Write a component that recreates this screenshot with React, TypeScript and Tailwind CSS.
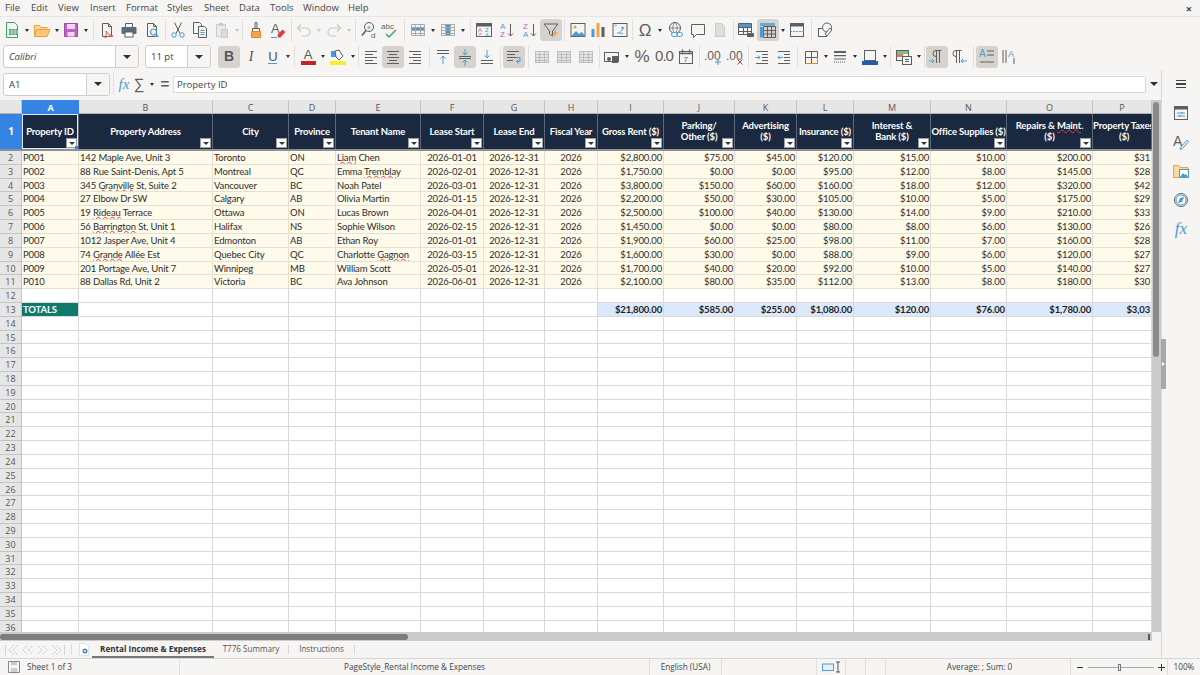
import type { ReactNode } from 'react'

const GREY = '#5e5e5e'
const BLUE = '#4a9ad4'
const PALE = '#c9c9c9'
const SANS = 'Liberation Sans, sans-serif'

const COLS = 'grid grid-cols-[22px_57px_134px_76px_47px_85px_63px_61px_53px_66px_71px_62px_57px_77px_76px_86px_59px]'

const LETTERS = ['A', 'B', 'C', 'D', 'E', 'F', 'G', 'H', 'I', 'J', 'K', 'L', 'M', 'N', 'O', 'P']

const HEADERS = [
  ['Property ID'],
  ['Property Address'],
  ['City'],
  ['Province'],
  ['Tenant Name'],
  ['Lease Start'],
  ['Lease End'],
  ['Fiscal Year'],
  ['Gross Rent ($)'],
  ['Parking/', 'Other ($)'],
  ['Advertising', '($)'],
  ['Insurance ($)'],
  ['Interest &', 'Bank ($)'],
  ['Office Supplies ($)'],
  ['Repairs & Maint.', '($)'],
  ['Property Taxes', '($)'],
]

const END = '2026-12-31'
const ROWS = [
  ['P001', '142 Maple Ave, Unit 3', 'Toronto', 'ON', 'Liam Chen', '2026-01-01', END, '2026', '$2,800.00', '$75.00', '$45.00', '$120.00', '$15.00', '$10.00', '$200.00', '$31'],
  ['P002', '88 Rue Saint-Denis, Apt 5', 'Montreal', 'QC', 'Emma Tremblay', '2026-02-01', END, '2026', '$1,750.00', '$0.00', '$0.00', '$95.00', '$12.00', '$8.00', '$145.00', '$28'],
  ['P003', '345 Granville St, Suite 2', 'Vancouver', 'BC', 'Noah Patel', '2026-03-01', END, '2026', '$3,800.00', '$150.00', '$60.00', '$160.00', '$18.00', '$12.00', '$320.00', '$42'],
  ['P004', '27 Elbow Dr SW', 'Calgary', 'AB', 'Olivia Martin', '2026-01-15', END, '2026', '$2,200.00', '$50.00', '$30.00', '$105.00', '$10.00', '$5.00', '$175.00', '$29'],
  ['P005', '19 Rideau Terrace', 'Ottawa', 'ON', 'Lucas Brown', '2026-04-01', END, '2026', '$2,500.00', '$100.00', '$40.00', '$130.00', '$14.00', '$9.00', '$210.00', '$33'],
  ['P006', '56 Barrington St, Unit 1', 'Halifax', 'NS', 'Sophie Wilson', '2026-02-15', END, '2026', '$1,450.00', '$0.00', '$0.00', '$80.00', '$8.00', '$6.00', '$130.00', '$26'],
  ['P007', '1012 Jasper Ave, Unit 4', 'Edmonton', 'AB', 'Ethan Roy', '2026-01-01', END, '2026', '$1,900.00', '$60.00', '$25.00', '$98.00', '$11.00', '$7.00', '$160.00', '$28'],
  ['P008', '74 Grande Allée Est', 'Quebec City', 'QC', 'Charlotte Gagnon', '2026-03-15', END, '2026', '$1,600.00', '$30.00', '$0.00', '$88.00', '$9.00', '$6.00', '$120.00', '$27'],
  ['P009', '201 Portage Ave, Unit 7', 'Winnipeg', 'MB', 'William Scott', '2026-05-01', END, '2026', '$1,700.00', '$40.00', '$20.00', '$92.00', '$10.00', '$5.00', '$140.00', '$27'],
  ['P010', '88 Dallas Rd, Unit 2', 'Victoria', 'BC', 'Ava Johnson', '2026-06-01', END, '2026', '$2,100.00', '$80.00', '$35.00', '$112.00', '$13.00', '$8.00', '$180.00', '$30'],
]
const TOTALS = ['$21,800.00', '$585.00', '$255.00', '$1,080.00', '$120.00', '$76.00', '$1,780.00', '$3,03']

const MISSPELT = new Set(['Liam', 'Tremblay', 'Granville', 'Rideau', 'Barrington', 'Grande', 'Gagnon', 'Maint'])

function Spelled({ text }: { text: string }) {
  return (
    <>
      {text.split(/(\s+|,|\.)/).map((part, i) =>
        MISSPELT.has(part) ? (
          <span key={i} className="underline decoration-wavy decoration-[#e0403a] decoration-[0.7px] underline-offset-[0px]">
            {part}
          </span>
        ) : (
          <span key={i}>{part}</span>
        ),
      )}
    </>
  )
}

function I({ children, size = 18 }: { children: ReactNode; size?: number }) {
  return (
    <svg width={size} height={size} viewBox="0 0 18 18" fill="none" strokeWidth="1">
      {children}
    </svg>
  )
}

function Btn({ w = 22, on, children }: { w?: number; on?: boolean; children: ReactNode }) {
  return (
    <div
      style={{ width: w }}
      className={`h-[22px] shrink-0 flex items-center justify-center rounded-[3px] ${on ? 'bg-[#d6d3cf]' : ''}`}
    >
      {children}
    </div>
  )
}

function Arrow({ w = 8, pale }: { w?: number; pale?: boolean }) {
  return (
    <div style={{ width: w }} className="h-[22px] shrink-0 flex items-center justify-center">
      <div className={`w-0 h-0 border-x-[2.5px] border-x-transparent border-t-[3px] ${pale ? 'border-t-[#c9c9c9]' : 'border-t-[#2e2e2e]'}`} />
    </div>
  )
}

function Sep({ w = 6 }: { w?: number }) {
  return (
    <div style={{ width: w }} className="h-[22px] shrink-0 flex justify-center">
      <div className="w-px h-full bg-[#e2e0dd]" />
    </div>
  )
}

function Lines({ rows, color = GREY }: { rows: [number, number, number][]; color?: string }) {
  return (
    <>
      {rows.map(([y, a, b], i) => (
        <path key={i} d={`M${a} ${y}.5H${b}`} stroke={color} />
      ))}
    </>
  )
}

function GridGlyph({ color = '#a9a9a9', hi, fill }: { color?: string; hi?: 'row' | 'col'; fill?: string }) {
  return (
    <I>
      {fill && <rect x="2" y="3" width="14" height="12" fill={fill} />}
      {hi === 'row' && <rect x="2" y="6" width="14" height="3" fill={BLUE} />}
      {hi === 'col' && <rect x="7" y="3" width="4" height="12" fill={BLUE} />}
      <path d="M2.5 3.5h13v11h-13zM2.5 6.5h13M2.5 9.5h13M2.5 12.5h13M6.5 3.5v11M11.5 3.5v11" stroke={color} />
    </I>
  )
}

function Page({ stroke = GREY }: { stroke?: string }) {
  return <path d="M4.5 2.5h6l3 3v10h-9zM10.5 2.5v3h3" stroke={stroke} strokeLinejoin="round" />
}

function Az({ top, bottom, x = 3 }: { top: string; bottom: string; x?: number }) {
  return (
    <>
      <text x={x} y="8" fontSize="8" fontFamily={SANS} fill={top === 'A' ? BLUE : '#c25bd0'}>{top}</text>
      <text x={x} y="16" fontSize="8" fontFamily={SANS} fill={bottom === 'A' ? BLUE : '#c25bd0'}>{bottom}</text>
      <path d="M13.5 3v12M11 12.5l2.5 2.5 2.5-2.5" stroke={GREY} />
    </>
  )
}

function ToolbarOne() {
  return (
    <div className="h-[26px] flex items-center pl-px">
      <Btn>
        <I>
          <path d="M3.5 1.5h8l3 3v12h-11z" stroke="#3f9f5f" />
          <rect x="6" y="8" width="9" height="6" fill="#3f9f5f" />
          <path d="M6 10h9M6 12h9M9 8v6M12 8v6" stroke="#fff" strokeWidth=".6" />
        </I>
      </Btn>
      <Arrow />
      <Btn>
        <I>
          <path d="M1.5 4.5h5l1.5 2h6v2h-10l-2.5 6z" fill="#fbd9a0" stroke="#ef9f3b" />
          <path d="M1.5 15.5l2.5-7h13l-3 7z" fill="#fcc777" stroke="#ef9f3b" />
        </I>
      </Btn>
      <Arrow />
      <div className="-ml-px"><Btn>
        <I>
          <path d="M2.5 2.5h13v13h-13z" fill="#bf5fc4" stroke="#a648ab" />
          <rect x="5" y="3" width="8" height="5" fill="#f0d6f2" />
          <rect x="5.5" y="11" width="7" height="4.5" fill="#f0d6f2" />
        </I>
      </Btn></div>
      <Arrow />
      <Sep />
      <Btn>
        <I>
          <Page />
          <path d="M8 10c1 2 3 4 7 5-3 0-6 0-8 2 1-3 2-5 1-7z" stroke="#d9534f" />
        </I>
      </Btn>
      <Btn>
        <I>
          <path d="M5.5 6V2.5h7V6" stroke={GREY} />
          <rect x="1.5" y="6" width="15" height="7" rx="1" fill="#5b6b78" />
          <rect x="5" y="11" width="8" height="5" fill="#fff" stroke={GREY} />
        </I>
      </Btn>
      <div className="ml-px"><Btn>
        <I>
          <Page />
          <circle cx="10.5" cy="11" r="3" stroke={BLUE} strokeWidth="1.2" />
          <path d="M12.8 13.3l2.5 2.5" stroke={BLUE} strokeWidth="1.4" />
        </I>
      </Btn></div>
      <Sep w={4} />
      <Btn>
        <I>
          <path d="M5.5 1.5l5.5 11M12.5 1.5l-5.5 11" stroke={GREY} />
          <circle cx="5" cy="14" r="2.2" stroke={BLUE} />
          <circle cx="13" cy="14" r="2.2" stroke={BLUE} />
        </I>
      </Btn>
      <Btn>
        <I>
          <path d="M2.5 1.5h6l2 2v9h-8z" stroke={GREY} />
          <path d="M7.5 5.5h6l2 2v9h-8z" fill="#f6f5f4" stroke={GREY} />
          <path d="M9.5 9.5h4M9.5 11.5h4M9.5 13.5h4" stroke={BLUE} />
        </I>
      </Btn>
      <Btn>
        <I>
          <path d="M3.5 3.5h9v12h-9z" stroke={PALE} fill="#ececec" />
          <path d="M6 2h4v3H6z" fill={PALE} />
          <path d="M8.5 8.5h6v8h-6z" fill="#dcdcdc" stroke={PALE} />
        </I>
      </Btn>
      <Arrow w={7} pale />
      <Sep w={5} />
      <Btn>
        <I>
          <path d="M8 1.5h2v6H8z" stroke={GREY} />
          <path d="M5.5 7.5h7v3h-7z" fill="#f6f5f4" stroke={GREY} />
          <path d="M4.5 10.5h9v6h-9z" fill="#f5a34a" stroke="#e58a23" />
        </I>
      </Btn>
      <Btn>
        <I>
          <text x="2" y="12" fontSize="13" fontFamily={SANS} fill={GREY}>A</text>
          <path d="M8.5 13.5l5-5 3 2.5-5 5.5h-2.5z" fill="#e0403a" />
          <path d="M2 16.5h6" stroke={BLUE} />
        </I>
      </Btn>
      <Sep w={4} />
      <Btn>
        <I>
          <path d="M6 3.5L2.5 7 6 10.5M2.5 7H11a4 4 0 0 1 0 8H7" stroke={PALE} strokeWidth="1.2" />
        </I>
      </Btn>
      <Arrow pale />
      <Btn>
        <I>
          <path d="M12 3.5L15.5 7 12 10.5M15.5 7H7a4 4 0 0 0 0 8h4" stroke={PALE} strokeWidth="1.2" />
        </I>
      </Btn>
      <Arrow pale />
      <Sep w={5} />
      <Btn>
        <I>
          <circle cx="9" cy="6" r="4.5" stroke={GREY} />
          <path d="M6 9.5l-4 5" stroke={GREY} strokeWidth="1.6" />
          <text x="7" y="8" fontSize="6" fontFamily={SANS} fill={BLUE}>a</text>
          <text x="11" y="17" fontSize="8" fontFamily={SANS} fill={GREY}>d</text>
        </I>
      </Btn>
      <div className="-ml-px"><Btn>
        <I>
          <text x="0" y="8" fontSize="8" fontFamily={SANS} fill={GREY}>abc</text>
          <path d="M5 13l3 3 7-7" stroke="#3f9f5f" strokeWidth="1.4" />
        </I>
      </Btn></div>
      <Sep />
      <Btn><GridGlyph hi="row" /></Btn>
      <Arrow />
      <Btn><GridGlyph hi="col" /></Btn>
      <Arrow />
      <Sep w={6} />
      <Btn>
        <I>
          <rect x="1.5" y="2.5" width="15" height="13" stroke={GREY} />
          <rect x="1.5" y="2.5" width="15" height="3" fill={GREY} />
          <text x="3" y="11" fontSize="6" fontFamily={SANS} fill="#c25bd0">A</text>
          <text x="3" y="15.5" fontSize="6" fontFamily={SANS} fill="#c25bd0">Z</text>
          <text x="10" y="11" fontSize="6" fontFamily={SANS} fill={BLUE}>Z</text>
          <text x="10" y="15.5" fontSize="6" fontFamily={SANS} fill={BLUE}>A</text>
        </I>
      </Btn>
      <Btn><I><Az top="A" bottom="Z" /></I></Btn>
      <div className="ml-px"><Btn><I><Az top="Z" bottom="A" /></I></Btn></div>
      <Btn on>
        <I>
          <path d="M2 3h14l-5.5 7v5l-3-2v-3z" stroke={GREY} strokeLinejoin="round" />
          <path d="M14.5 7l-4 6 2 .5-1 3.5 4-5.5-2-.5z" fill="#f0a63a" />
        </I>
      </Btn>
      <Sep w={5} />
      <Btn>
        <I>
          <rect x="2" y="2.5" width="14" height="13" stroke={GREY} />
          <circle cx="6" cy="6" r="1.5" fill="#f0a63a" />
          <path d="M2.5 15l4.5-5 3 3 2.5-2 3 3v1.5z" fill={BLUE} />
        </I>
      </Btn>
      <div className="-ml-[2px]"><Btn>
        <I>
          <rect x="2.5" y="8" width="3" height="8" fill={BLUE} />
          <rect x="7.5" y="2" width="3" height="14" fill="#f0a63a" />
          <rect x="12.5" y="6" width="3" height="10" fill={GREY} />
        </I>
      </Btn></div>
      <Btn>
        <I>
          <rect x="2" y="2.5" width="14" height="13" stroke={GREY} />
          <rect x="3" y="3.5" width="3" height="2" fill={PALE} />
          <path d="M6 12c2 0 5-1 6-6M12 6l-2 1M12 6l1 2M12 12c-2 1-4 0-4 0" stroke={BLUE} />
        </I>
      </Btn>
      <Sep w={3} />
      <Btn>
        <span className="text-[17px] leading-none text-[#5e5e5e] font-['Liberation_Sans',sans-serif]">Ω</span>
      </Btn>
      <Arrow />
      <div className="ml-px"><Btn>
        <I>
          <circle cx="8" cy="7" r="5.5" stroke={GREY} />
          <path d="M2.5 7h11M8 1.5c-3 3-3 8 0 11M8 1.5c3 3 3 8 0 11" stroke={GREY} strokeWidth=".7" />
          <rect x="4.5" y="11.5" width="6" height="4" rx="2" fill="#f6f5f4" stroke={BLUE} />
          <rect x="9.5" y="11.5" width="6" height="4" rx="2" stroke={BLUE} />
        </I>
      </Btn></div>
      <Btn>
        <I>
          <path d="M2.5 3.5h13v10H7.5l-3 3v-3h-2z" stroke={GREY} strokeLinejoin="round" />
        </I>
      </Btn>
      <Btn>
        <I>
          <path d="M4.5 2.5h6l3 3v10h-9z" fill="#dededc" stroke={PALE} />
        </I>
      </Btn>
      <Sep w={4} />
      <Btn>
        <I>
          <path d="M1.5 2.5h13v11h-13zM1.5 6.5h13M1.5 10.5h13M6.5 2.5v11M10.5 2.5v11" stroke={GREY} />
          <rect x="2" y="3" width="12" height="3" fill={BLUE} />
          <rect x="10" y="12" width="7" height="4" rx="1" fill={GREY} />
        </I>
      </Btn>
      <Btn on>
        <I>
          <path d="M4.5 5.5h12v11h-12zM4.5 9.5h12M4.5 13h12M8.5 5.5v11M12.5 5.5v11" stroke={GREY} />
          <rect x="1" y="6" width="3.5" height="10.5" fill={BLUE} />
          <rect x="1" y="2" width="15" height="3" fill={BLUE} opacity=".75" />
        </I>
      </Btn>
      <Arrow w={7} />
      <Btn>
        <I>
          <rect x="2.5" y="2.5" width="13" height="13" stroke={GREY} />
          <rect x="2.5" y="2.5" width="13" height="3" fill={GREY} />
          <path d="M2 10.5h14" stroke={BLUE} strokeDasharray="2 1" />
        </I>
      </Btn>
      <Sep />
      <Btn>
        <I>
          <rect x="2.5" y="7.5" width="8" height="8" stroke={GREY} />
          <circle cx="11" cy="6.5" r="4.5" fill="#f6f5f4" stroke={GREY} />
          <path d="M9 13l5-6 2 2-5 6z" fill="#f6f5f4" stroke={GREY} />
        </I>
      </Btn>
    </div>
  )
}

function Combo({ w, value, dd, italic }: { w: number; value: string; dd: number; italic?: boolean }) {
  return (
    <div style={{ width: w }} className="h-[23px] shrink-0 flex rounded-[3px] border border-[#cfcdc9] bg-white overflow-hidden">
      <div className={`flex-1 pl-[5px] text-[9.5px] leading-[21px] text-[#3d3d3d] ${italic ? 'italic' : ''}`}>{value}</div>
      <div style={{ width: dd }} className="border-l border-[#cfcdc9] bg-[#f6f5f4] flex items-center justify-center">
        <div className="w-0 h-0 border-x-[4px] border-x-transparent border-t-[4px] border-t-[#2e2e2e]" />
      </div>
    </div>
  )
}

function TextLines({ rows, color = GREY }: { rows: [number, number, number][]; color?: string }) {
  return <I><Lines rows={rows} color={color} /></I>
}

function VAlign({ pos }: { pos: 'top' | 'mid' | 'bot' }) {
  return (
    <I>
      {pos === 'top' && <><path d="M3 2.5h12M3 5.5h12" stroke={GREY} /><path d="M9 16V8M6.5 10.5L9 8l2.5 2.5" stroke={BLUE} /></>}
      {pos === 'mid' && <><path d="M3 8.5h12M3 10.5h12" stroke={GREY} /><path d="M9 1v6M6.5 4.5L9 7l2.5-2.5M9 18v-6M6.5 14.5L9 12l2.5 2.5" stroke={BLUE} /></>}
      {pos === 'bot' && <><path d="M3 12.5h12M3 15.5h12" stroke={GREY} /><path d="M9 2v8M6.5 7.5L9 10l2.5-2.5" stroke={BLUE} /></>}
    </I>
  )
}

function ToolbarTwo() {
  return (
    <div className="h-[27px] flex items-center pl-[3px]">
      <Combo w={136} value="Calibri" dd={23} italic />
      <div className="w-[6px] shrink-0" />
      <Combo w={66} value="11 pt" dd={23} />
      <div className="w-[7px] shrink-0" />
      <Btn on><span className="text-[14px] font-bold text-[#555] font-['Liberation_Sans',sans-serif]">B</span></Btn>
      <Btn><span className="text-[14px] italic text-[#555] font-['Liberation_Serif',serif]">I</span></Btn>
      <Btn>
        <div className="flex flex-col items-center leading-none">
          <span className="text-[13px] text-[#555] font-['Liberation_Sans',sans-serif]">U</span>
          <div className="w-[9px] h-px bg-[#4a9ad4]" />
        </div>
      </Btn>
      <Arrow w={8} />
      <Sep w={5} />
      <Btn>
        <div className="flex flex-col items-center leading-none">
          <span className="text-[13px] text-[#555] font-['Liberation_Sans',sans-serif]">A</span>
          <div className="w-[15px] h-[4px] bg-[#c9211e]" />
        </div>
      </Btn>
      <Arrow w={8} />
      <Btn>
        <I>
          <rect x="2" y="3" width="6" height="6" fill={BLUE} />
          <path d="M6 3l4-1 4 6-4 4-3-3z" fill="#f6f5f4" stroke={GREY} />
          <rect x="1" y="13" width="16" height="4" fill="#f7ef2a" />
        </I>
      </Btn>
      <Arrow w={8} />
      <Sep w={3} />
      <Btn><TextLines rows={[[3, 3, 15], [6, 3, 11], [9, 3, 15], [12, 3, 11], [15, 3, 15]]} /></Btn>
      <Btn on><TextLines rows={[[3, 3, 15], [6, 5, 13], [9, 3, 15], [12, 5, 13], [15, 3, 15]]} /></Btn>
      <Btn><TextLines rows={[[3, 3, 15], [6, 7, 15], [9, 3, 15], [12, 7, 15], [15, 3, 15]]} /></Btn>
      <Sep w={6} />
      <Btn><VAlign pos="top" /></Btn>
      <Btn on><VAlign pos="mid" /></Btn>
      <Btn><VAlign pos="bot" /></Btn>
      <Sep w={5} />
      <Btn on>
        <I>
          <Lines rows={[[3, 2, 14], [6, 2, 10], [9, 2, 14], [12, 2, 8]]} />
          <path d="M11 9.5h4v4h-3M13.5 11.5l-2 2 2 2" stroke={BLUE} />
        </I>
      </Btn>
      <Sep w={6} />
      {[0, 1, 2].map(i => (
        <Btn key={i}><GridGlyph color="#bdbdbd" fill="#e4e4e2" /></Btn>
      ))}
      <Sep w={4} />
      <Btn>
        <I>
          <rect x="1.5" y="4.5" width="14" height="9" stroke={GREY} />
          <circle cx="6" cy="11" r="2" fill={GREY} />
          <rect x="9" y="8" width="6" height="7" fill={GREY} />
        </I>
      </Btn>
      <Arrow w={8} />
      <Btn><span className="text-[17px] font-light text-[#5e5e5e] font-['Liberation_Sans',sans-serif]">%</span></Btn>
      <Btn><span className="text-[15px] tracking-[-1px] text-[#5e5e5e] font-['Liberation_Sans',sans-serif]">0.0</span></Btn>
      <Btn>
        <I>
          <rect x="2.5" y="3.5" width="13" height="12" stroke={GREY} />
          <path d="M2.5 5.5h13M5.5 1.5v3M12.5 1.5v3" stroke={GREY} strokeWidth="1.3" />
          <text x="6.5" y="14" fontSize="8" fontFamily={SANS} fill={GREY}>7</text>
        </I>
      </Btn>
      <Sep w={5} />
      <Btn>
        <I>
          <text x="0" y="12" fontSize="12" fontFamily={SANS} fill={GREY}>.00</text>
          <path d="M14 11v6M11 14h6" stroke={BLUE} />
        </I>
      </Btn>
      <Btn>
        <I>
          <text x="0" y="12" fontSize="12" fontFamily={SANS} fill={GREY}>.00</text>
          <path d="M11.5 11.5l5 5M16.5 11.5l-5 5" stroke="#e0403a" />
        </I>
      </Btn>
      <Sep w={5} />
      <Btn>
        <I>
          <Lines rows={[[3, 3, 15], [6, 9, 15], [9, 9, 15], [12, 9, 15], [15, 3, 15]]} />
          <path d="M2 9.5h5M5 7.5l2 2-2 2" stroke={BLUE} />
        </I>
      </Btn>
      <Btn>
        <I>
          <Lines rows={[[3, 3, 15], [6, 9, 15], [9, 9, 15], [12, 9, 15], [15, 3, 15]]} />
          <path d="M8 9.5H3M5 7.5l-2 2 2 2" stroke={BLUE} />
        </I>
      </Btn>
      <Sep w={5} />
      <Btn>
        <I>
          <path d="M3.5 3.5h12v12h-12zM9.5 3.5v12M3.5 9.5h12" stroke={GREY} />
          <path d="M3.5 15.5h12v-6" stroke="#e58a23" />
        </I>
      </Btn>
      <Arrow w={7} />
      <Btn>
        <I>
          <path d="M3 3h12v2H3zM3 7h12v1.3H3z" fill={GREY} />
          <path d="M3 11h12" stroke={GREY} />
          <path d="M3 14h12" stroke={GREY} strokeDasharray="1 1" />
        </I>
      </Btn>
      <Arrow w={8} />
      <Btn>
        <I>
          <rect x="3.5" y="2.5" width="11" height="10" stroke={GREY} />
          <rect x="1" y="13" width="16" height="4" fill="#1f5fa8" />
        </I>
      </Btn>
      <Arrow w={7} />
      <Sep w={5} />
      <Btn>
        <I>
          <rect x="1.5" y="2.5" width="12" height="10" stroke={GREY} />
          <rect x="2" y="3" width="11" height="3" fill="#7fc07f" />
          <rect x="2" y="6" width="6" height="3" fill="#e57373" />
          <rect x="7.5" y="8.5" width="9" height="8" fill="#f6f5f4" stroke={GREY} />
          <path d="M10 11.5h4M10 13.5h4" stroke={GREY} />
        </I>
      </Btn>
      <Arrow w={7} />
      <Sep w={4} />
      <Btn on>
        <I>
          <path d="M8.5 15V3M11.5 15V3M13.5 2.5H8a3 3 0 0 0 0 6h.5" stroke={GREY} />
          <path d="M1 13h5M4 11l2 2-2 2" stroke={BLUE} />
        </I>
      </Btn>
      <Btn>
        <I>
          <path d="M6.5 15V3M9.5 15V3M11.5 2.5H6a3 3 0 0 0 0 6h.5" stroke={GREY} />
          <path d="M11 13h6M13 11l-2 2 2 2" stroke={BLUE} />
        </I>
      </Btn>
      <Sep w={6} />
      <Btn on>
        <I>
          <text x="1" y="9" fontSize="10" fontFamily={SANS} fill={BLUE}>A</text>
          <path d="M9 3h7M9 7h7M2 14h14" stroke={GREY} />
        </I>
      </Btn>
      <Btn>
        <I>
          <text x="8" y="9" fontSize="9" fontFamily={SANS} fill={BLUE}>A</text>
          <path d="M3 2v13M6 2v13M14 10v6" stroke={GREY} />
        </I>
      </Btn>
    </div>
  )
}

function FormulaBar() {
  return (
    <div className="h-[30px] shrink-0 flex items-center pl-[3px] pb-[2px]">
      <Combo w={107} value="A1" dd={23} />
      <Sep w={6} />
      <Btn w={16}>
        <span className="text-[15px] italic text-[#4a9ad4] font-['Liberation_Serif',serif]">fx</span>
      </Btn>
      <Btn w={14}>
        <span className="text-[15px] text-[#5e5e5e] font-['Liberation_Sans',sans-serif]">∑</span>
      </Btn>
      <Arrow w={12} />
      <Btn w={14}>
        <span className="text-[15px] font-semibold text-[#5e5e5e] font-['Liberation_Sans',sans-serif]">=</span>
      </Btn>
      <div className="ml-px w-[973px] h-[17px] bg-white border border-[#dcdad6] rounded-[1px] pl-[3px] text-[9.5px] leading-[15px] text-[#444] shrink-0">
        Property ID
      </div>
      <div className="w-[15px] flex justify-center">
        <div className="w-0 h-0 border-x-[4px] border-x-transparent border-t-[4px] border-t-[#2e2e2e]" />
      </div>
    </div>
  )
}

function FilterBtn() {
  return (
    <div className="absolute right-px bottom-px w-[11px] h-[10px] bg-white border border-[#9aa0a8] flex items-center justify-center">
      <div className="w-0 h-0 border-x-[3px] border-x-transparent border-t-[3px] border-t-[#333]" />
    </div>
  )
}

function Sheet() {
  const blanks = Array.from({ length: 23 }, (_, i) => i + 14)
  return (
    <div className="flex-1 overflow-hidden bg-white font-['Lato',sans-serif] text-[9.5px] tracking-[-0.15px] text-[#2c2c2c]">
      {/* column letters */}
      <div className={`${COLS} h-[14px] bg-[#e6e6e6] border-b border-[#b0b0b0] tracking-normal`}>
        <div className="border-r border-[#c4c4c4]" />
        {LETTERS.map((l, i) => (
          <div
            key={l}
            className={`text-center leading-[15px] font-['Open_Sans',sans-serif] text-[9px] ${i === 0 ? 'bg-[#3584e4] text-white font-bold' : 'text-[#555] border-r border-[#c4c4c4]'}`}
          >
            {l}
          </div>
        ))}
      </div>

      {/* header row */}
      <div className={`${COLS} h-[37px] border-b-2 border-[#8d9097]`}>
        <div className="bg-[#3584e4] text-white font-bold text-[10px] font-['Open_Sans',sans-serif] flex items-center justify-center">1</div>
        {HEADERS.map((lines, i) => (
          <div
            key={i}
            className={`relative bg-[#1b2940] text-white font-bold border-r border-[#5e6878] flex flex-col justify-center leading-[11px] overflow-hidden whitespace-nowrap pb-px ${i === 15 ? 'items-start' : 'items-center'}`}
          >
            {lines.map((line, j) => (
              <span key={j} className={i === 15 && j === 1 ? 'ml-[26px]' : ''}>
                <Spelled text={line} />
              </span>
            ))}
            {i < 15 && <FilterBtn />}
            {i === 0 && (
              <>
                <div className="absolute inset-0 border border-[#dfe9f7]" />
                <div className="absolute right-0 bottom-0 w-[3px] h-[3px] bg-[#3584e4]" />
              </>
            )}
          </div>
        ))}
      </div>

      {/* data rows */}
      {ROWS.map((row, r) => (
        <div key={r} className={`${COLS} h-[13.82px]`}>
          <RowNum n={r + 2} />
          {row.map((cell, c) => (
            <div
              key={c}
              className={`bg-[#fffbeb] border-r border-b border-[#e4e1d4] leading-[13px] overflow-hidden whitespace-nowrap px-px ${c === 5 || c === 6 || c === 7 ? 'text-center' : c >= 8 ? 'text-right' : 'text-left'}`}
            >
              <Spelled text={cell} />
            </div>
          ))}
        </div>
      ))}

      <div className={`${COLS} h-[13.82px]`}>
        <RowNum n={12} />
        {LETTERS.map(l => <Blank key={l} />)}
      </div>

      <div className={`${COLS} h-[13.82px]`}>
        <RowNum n={13} />
        <div className="bg-[#0f7a6c] text-white font-bold leading-[13px] px-px border-r border-b border-[#d9d9d9] overflow-hidden">TOTALS</div>
        {LETTERS.slice(1, 8).map(l => <Blank key={l} />)}
        {TOTALS.map((t, i) => (
          <div key={i} className="bg-[#dbe9fb] font-bold text-right leading-[13px] px-px border-r border-b border-[#d9d9d9] overflow-hidden text-[#1d1d1d]">
            {t}
          </div>
        ))}
      </div>

      {blanks.map(n => (
        <div key={n} className={`${COLS} h-[13.82px]`}>
          <RowNum n={n} />
          {LETTERS.map(l => <Blank key={l} />)}
        </div>
      ))}
    </div>
  )
}

function RowNum({ n }: { n: number }) {
  return (
    <div className="bg-[#e6e6e6] border-r border-b border-[#c4c4c4] text-center text-[9px] tracking-normal leading-[13px] text-[#555] font-['Open_Sans',sans-serif] overflow-hidden">
      {n}
    </div>
  )
}

function Blank() {
  return <div className="border-r border-b border-[#d9d9d9]" />
}

function Sidebar() {
  return (
    <div className="relative w-[39px] shrink-0 border-l border-[#d9d7d3] flex flex-col items-center pt-[5px]">
      <div className="h-[18px] flex flex-col justify-center gap-[2px]">
        <div className="w-[10px] h-[1.5px] bg-[#444]" />
        <div className="w-[10px] h-[1.5px] bg-[#444]" />
        <div className="w-[10px] h-[1.5px] bg-[#444]" />
      </div>
      <div className="mt-[11px] flex flex-col gap-[11px]">
        <I>
          <rect x="2.5" y="2.5" width="13" height="13" stroke={GREY} />
          <rect x="2.5" y="2.5" width="13" height="3" fill={GREY} />
          <path d="M5 9h8M5 12h8" stroke={BLUE} />
          <path d="M10 8v2M8 11v2" stroke={BLUE} />
        </I>
        <I>
          <text x="1" y="13" fontSize="14" fontFamily={SANS} fill={GREY}>A</text>
          <path d="M9 14l6-7 1.5 1.5-6 7-2.5 1z" stroke={BLUE} />
        </I>
        <I>
          <path d="M1.5 3.5h5l1.5 2h8v10h-14.5z" fill="#fbd9a0" stroke="#ef9f3b" />
          <rect x="7.5" y="7.5" width="9" height="8" fill="#fff" stroke={BLUE} />
          <path d="M8 15l3-4 2 2 1-1 2 3z" fill={BLUE} />
        </I>
        <I>
          <circle cx="9" cy="9" r="6.5" stroke={GREY} />
          <circle cx="9" cy="9" r="5" fill="#fff" stroke={BLUE} />
          <path d="M6 12l2-5 4-1-2 5z" fill={BLUE} />
        </I>
        <span className="text-[17px] leading-[18px] italic text-[#4a9ad4] font-['Liberation_Serif',serif] text-center">fx</span>
      </div>
    </div>
  )
}

function TabBar() {
  return (
    <div className="h-[17px] shrink-0 flex items-stretch text-[8.1px] whitespace-nowrap">
      <div className="w-[66px] pl-[5px] flex items-center">
        <svg width="60" height="12" viewBox="0 0 60 12" fill="none" stroke="#d4d4d4">
          <path d="M.5 1v10M9 1L4 6l5 5M13 1L8 6l5 5M22 2l-4 4 4 4M27 2l-4 4 4 4M33 2l4 4-4 4M38 2l4 4-4 4M47 1l5 5-5 5M51 1l5 5-5 5M59.5 1v10" />
        </svg>
      </div>
      <div className="w-[10px] flex items-center justify-center"><div className="w-px h-[11px] bg-[#dcdcdc]" /></div>
      <div className="w-[15px] flex items-center justify-center">
        <svg width="12" height="13" viewBox="0 0 12 13" fill="none">
          <path d="M1.5 .5h6l3 3v9h-9z" fill="#fff" stroke="#e2e2e2" />
          <circle cx="7" cy="8" r="2.5" fill="#4a7fc1" />
          <circle cx="7" cy="8" r="1" fill="#fff" />
        </svg>
      </div>
      <div className="w-[122px] ml-px flex items-center justify-center font-bold text-[#333] border-b-2 border-[#777] pt-px">
        Rental Income &amp; Expenses
      </div>
      <div className="w-[74px] flex items-center justify-center text-[#555]">T776 Summary</div>
      <div className="w-px my-[4px] bg-[#d5d5d5]" />
      <div className="w-[65px] flex items-center justify-center text-[#555]">Instructions</div>
      <div className="w-px my-[4px] bg-[#d5d5d5]" />
    </div>
  )
}

function StatusCell({ w, children, center, border = true }: { w: number; children?: ReactNode; center?: boolean; border?: boolean }) {
  return (
    <div style={{ width: w }} className={`h-full shrink-0 flex items-center ${center ? 'justify-center' : ''} ${border ? 'border-r border-[#e0dedb]' : ''}`}>
      {children}
    </div>
  )
}

function StatusBar() {
  return (
    <div className="h-[17px] shrink-0 flex border-t border-[#d9d7d3] text-[8.2px] text-[#444] whitespace-nowrap">
      <StatusCell w={180}>
        <div className="w-[27px] flex justify-center">
          <svg width="12" height="12" viewBox="0 0 12 12" fill="none">
            <path d="M.5.5h11v11H.5z" stroke="#888" />
            <rect x="3" y="1" width="6" height="3" fill="#ccc" />
            <rect x="3" y="7" width="6" height="4" fill="#ccc" />
          </svg>
        </div>
        Sheet 1 of 3
      </StatusCell>
      <StatusCell w={470} center>PageStyle_Rental Income &amp; Expenses</StatusCell>
      <StatusCell w={72} center>English (USA)</StatusCell>
      <StatusCell w={95} />
      <StatusCell w={29} center>
        <svg width="19" height="12" viewBox="0 0 19 12" fill="none">
          <rect x=".5" y="3" width="11" height="6.5" stroke="#4a9ad4" fill="#e6f0f8" />
          <path d="M14 1h4M16 1v10M14 11h4" stroke="#555" />
        </svg>
      </StatusCell>
      <StatusCell w={20} />
      <StatusCell w={20} />
      <StatusCell w={185} center><span className="pl-[3px]">Average: ; Sum: 0</span></StatusCell>
      <StatusCell w={97}>
        <div className="flex items-center pl-[6px] text-[#333]">
          <div className="w-[6px] h-px bg-[#333]" />
          <div className="ml-[5px] w-[30px] h-px bg-[#aaa]" />
          <div className="w-[3px] h-[7px] border border-[#777] bg-[#f6f5f4]" />
          <div className="w-[33px] h-px bg-[#aaa]" />
          <div className="ml-[4px] relative w-[7px] h-[7px] flex items-center justify-center">
            <div className="w-[7px] h-px bg-[#333]" />
            <div className="absolute h-[7px] w-px bg-[#333]" />
          </div>
        </div>
      </StatusCell>
      <StatusCell w={32} center border={false}>100%</StatusCell>
    </div>
  )
}

export default function App() {
  const menus: [string, number][] = [
    ['File', 26], ['Edit', 27], ['View', 32], ['Insert', 36], ['Format', 41], ['Styles', 37],
    ['Sheet', 35], ['Data', 31], ['Tools', 33], ['Window', 45], ['Help', 40],
  ]
  return (
    <div className="relative w-[1200px] h-[675px] overflow-hidden flex flex-col bg-[#f6f5f4] font-['Open_Sans',sans-serif] text-[#333]">
      <div className="h-[17px] shrink-0 flex items-center pl-[5px] border-b border-[#e8e6e3] text-[9.5px] text-[#444]">
        {menus.map(([m, w]) => (
          <div key={m} style={{ width: w }}>{m}</div>
        ))}
        <div className="ml-auto mr-[8px] text-[11px] font-bold leading-none">×</div>
      </div>
      <ToolbarOne />
      <ToolbarTwo />
      <div className="flex-1 min-h-0 flex">
        <div className="w-[1161px] shrink-0 flex flex-col">
          <FormulaBar />
          <div className="flex-1 min-h-0 flex">
            <div className="w-[1152px] shrink-0 flex flex-col overflow-hidden">
              <Sheet />
            </div>
            <div className="w-[9px] shrink-0 bg-[#cbcbcb] px-px">
              <div className="w-[6px] h-[255px] mt-[2px] rounded-[3px] bg-[#8a8a8a]" />
            </div>
          </div>
          <div className="h-[9px] shrink-0 flex bg-[#f6f5f4]">
            <div className="w-[1152px] bg-[#cbcbcb] flex items-center justify-between pr-[2px]">
              <div className="w-[408px] h-[6px] rounded-[3px] bg-[#7d7d7d]" />
              <div className="w-[2px] h-[6px] bg-[#555]" />
            </div>
          </div>
          <TabBar />
        </div>
        <Sidebar />
      </div>
      <StatusBar />
      {/* sidebar grip */}
      <div className="absolute left-[1161px] top-[339px] w-[5px] h-[50px] bg-[#a8a8a8] flex items-center justify-center">
        <div className="w-0 h-0 border-y-[2.5px] border-y-transparent border-l-[3px] border-l-white" />
      </div>
    </div>
  )
}
